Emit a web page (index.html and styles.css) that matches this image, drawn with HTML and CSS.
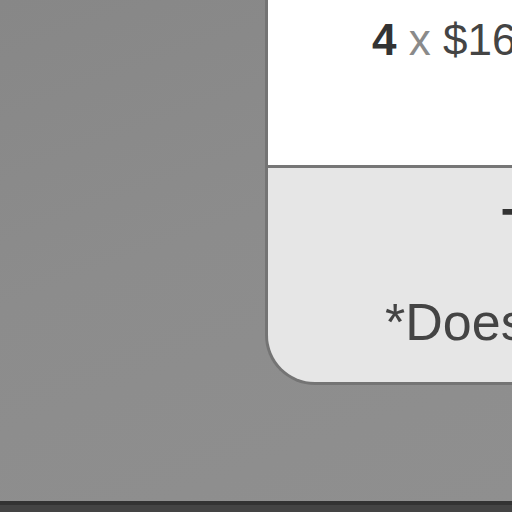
FILE: index.html
```html
<!DOCTYPE html>
<html lang="en">
<head>
<meta charset="utf-8">
<title>Order summary</title>
<link rel="stylesheet" href="styles.css">
</head>
<body>
<div class="stage">
  <div class="card">
    <div class="card-top">
      <p class="qty"><b class="qty-num">4</b><span class="times"> x </span><span class="price">$16.00</span></p>
    </div>
    <div class="card-bottom">
      <p class="total">Total: $64.00</p>
      <p class="note">*Does not include shipping</p>
    </div>
  </div>
</div>
<div class="footer-bar"></div>
</body>
</html>
```
FILE: styles.css
```css
html, body {
  margin: 0;
  padding: 0;
}
body {
  width: 512px;
  height: 512px;
  overflow: hidden;
  font-family: "Liberation Sans", Arial, sans-serif;
  background: #8c8c8c;
}
.stage {
  height: 501px;
  overflow: hidden;
  background: linear-gradient(160deg, #878787 0%, #8c8c8c 45%, #8f8f8f 100%);
  display: flex;
  align-items: flex-start;
}
.card {
  margin-left: 265px;
  width: 520px;
  flex: none;
  border-left: 3px solid #747474;
  border-bottom: 3px solid #747474;
  border-bottom-left-radius: 50px;
  overflow: hidden;
  white-space: nowrap;
}
.card-top {
  background: #ffffff;
  height: 168px;
  padding-top: 18px;
  box-sizing: border-box;
  border-bottom: 3px solid #767676;
}
.qty {
  margin: 0;
  padding-left: 104px;
  font-size: 44px;
  line-height: 44px;
  color: #444444;
}
.qty-num {
  font-weight: bold;
  color: #333333;
}
.times {
  color: #8a8a8a;
}
.card-bottom {
  background: #e6e6e6;
  height: 214px;
  padding-top: 33px;
  box-sizing: border-box;
  display: flex;
  flex-direction: column;
  gap: 43px;
}
.total {
  margin: 0;
  padding-left: 234px;
  font-size: 52px;
  line-height: 52px;
  font-weight: bold;
  color: #333333;
}
.note {
  margin: 0;
  padding-left: 117px;
  font-size: 52px;
  line-height: 52px;
  color: #444444;
}
.footer-bar {
  height: 7px;
  border-top: 4px solid #333333;
  background: #444444;
}
```
